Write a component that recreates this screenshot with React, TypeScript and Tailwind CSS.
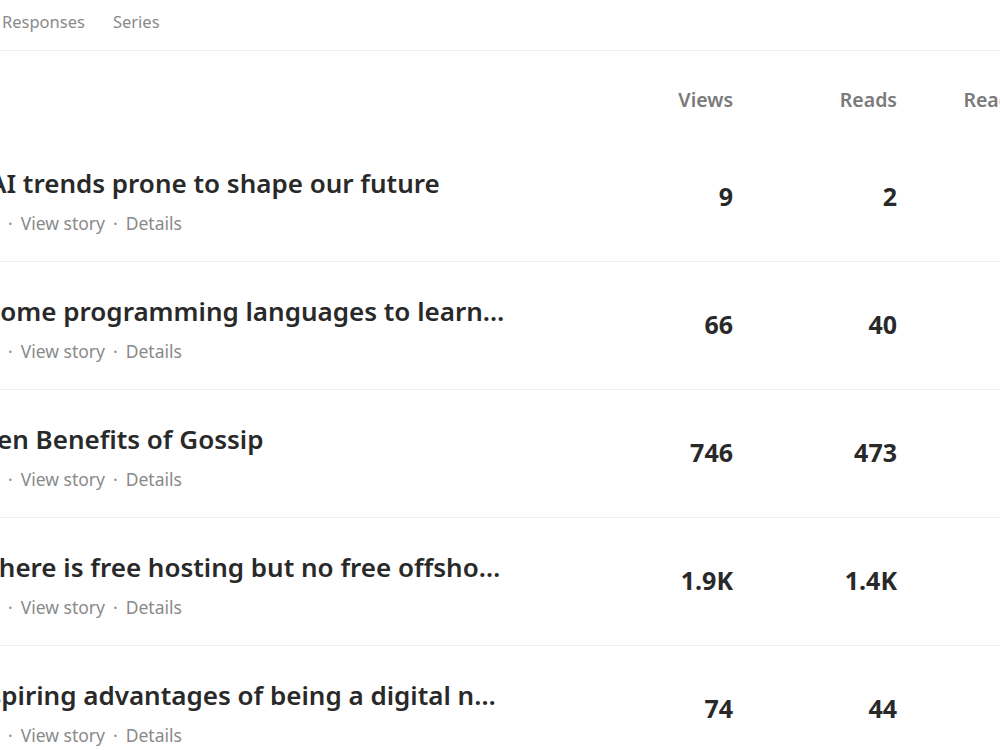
import React from "react";

type Story = {
  title: string;
  shift: number;
  badge: boolean;
  views: string;
  reads: string;
  ratio: string;
};

const stories: Story[] = [
  { title: "AI trends prone to shape our future", shift: -1, badge: true, views: "9", reads: "2", ratio: "22%" },
  { title: "Some programming languages to learn in 2019 and beyond", shift: 2, badge: true, views: "66", reads: "40", ratio: "61%" },
  { title: "Ten Benefits of Gossip", shift: 4, badge: false, views: "746", reads: "473", ratio: "63%" },
  { title: "There is free hosting but no free offshore hosting", shift: 4, badge: true, views: "1.9K", reads: "1.4K", ratio: "74%" },
  { title: "Aspiring advantages of being a digital nomad today", shift: 17, badge: true, views: "74", reads: "44", ratio: "59%" },
];

const sans = "font-['Noto_Sans','Open_Sans',sans-serif]";

export default function App() {
  return (
    <div className={`w-[1000px] h-[750px] overflow-hidden bg-white ${sans}`}>
      {/* tab strip */}
      <div className="h-[51px] border-b border-[#f0f0f0] flex items-start pt-[10px] gap-[28px] pl-[2px] text-[16.5px] leading-6 text-[#8a8a8a]">
        <span>Responses</span>
        <span>Series</span>
      </div>

      <div className="-ml-[12px] w-[1073px]">
        {/* column headings */}
        <div className="h-[83px] flex text-[19.5px] leading-6 font-semibold text-[#7a7a7a]">
          <div className="w-[581px]" />
          <div className="w-[164px] text-right pt-[37px]">Views</div>
          <div className="w-[164px] text-right pt-[37px]">Reads</div>
          <div className="w-[164px] text-right pt-[37px]">Read ratio</div>
        </div>

        {stories.map((s, i) => (
          <div key={i} className="h-[128px] flex border-b border-[#f0f0f0]">
            <div className="w-[581px] pr-[64px] pt-[33px] min-w-0">
              <div className="overflow-hidden">
                <div
                  className="text-[26px] leading-8 font-semibold text-[#292929] truncate"
                  style={{ marginLeft: -s.shift }}
                >
                  {s.title}
                </div>
              </div>
              <div className="mt-[12px] flex items-center text-[17.5px] leading-6 text-[#8a8a8a]">
                <span className="w-[12px] h-[14px] flex justify-end">
                  {s.badge && <span className="w-[2px] h-[14px] bg-[#bcd3ea]" />}
                </span>
                <span className="pl-[8px] pr-[8px]">·</span>
                <span>View story</span>
                <span className="pl-[8px] pr-[8px]">·</span>
                <span>Details</span>
              </div>
            </div>
            <div className="w-[164px] text-right pt-[46px] text-[25px] leading-8 font-bold text-[#292929]">{s.views}</div>
            <div className="w-[164px] text-right pt-[46px] text-[25px] leading-8 font-bold text-[#292929]">{s.reads}</div>
            <div className="w-[164px] text-right pt-[46px] text-[25px] leading-8 font-bold text-[#292929]">{s.ratio}</div>
          </div>
        ))}
      </div>
    </div>
  );
}
